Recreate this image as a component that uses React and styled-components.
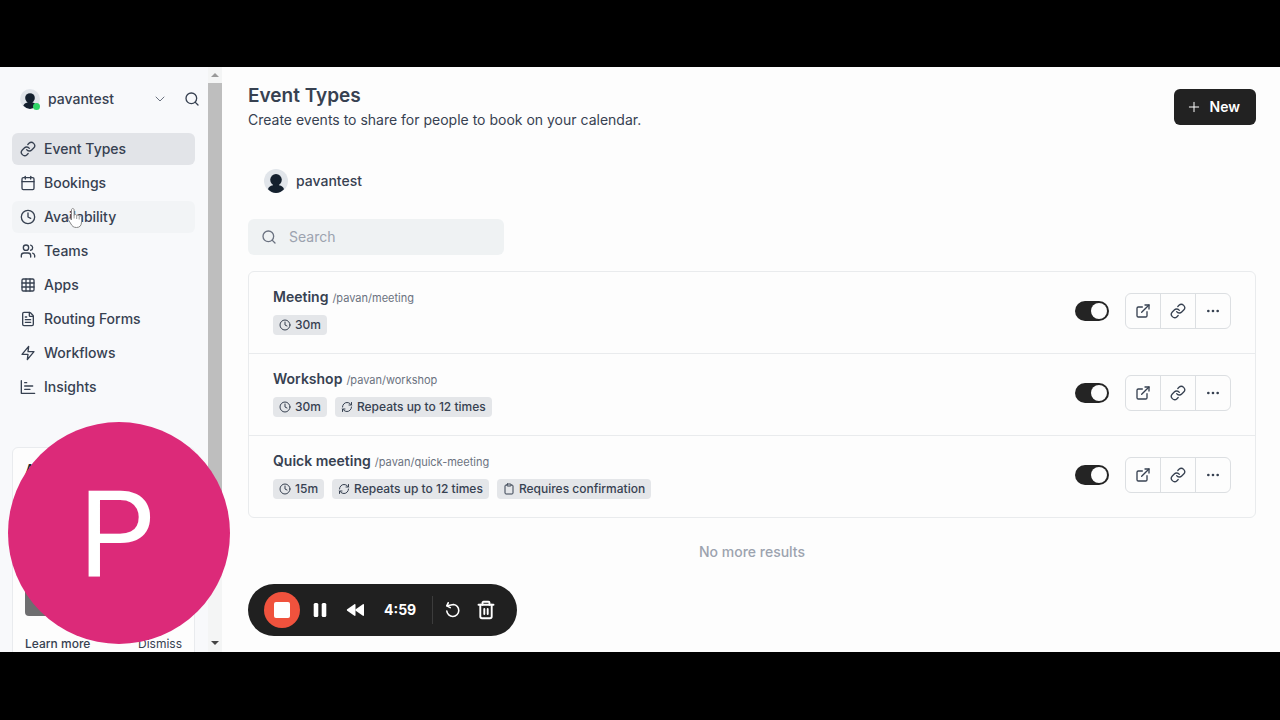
import React, { useState } from "react";
import styled, { createGlobalStyle } from "styled-components";
import {
  Calendar,
  ChevronDown,
  Clipboard,
  Clock,
  Ellipsis,
  ExternalLink,
  FileText,
  Grid3x3,
  Link as LinkIcon,
  Plus,
  RefreshCw,
  Search,
  Users,
} from "lucide-react";

const ZapIcon = ({ size }) => (
  <svg
    width={size}
    height={size}
    viewBox='0 0 24 24'
    fill='none'
    stroke='currentColor'
    strokeWidth='2'
    strokeLinecap='round'
    strokeLinejoin='round'
  >
    <polygon points='13 2 3 14 12 14 11 22 21 10 12 10 13 2' />
  </svg>
);

const InsightsIcon = ({ size }) => (
  <svg
    width={size}
    height={size}
    viewBox='0 0 24 24'
    fill='none'
    stroke='currentColor'
    strokeWidth='2'
    strokeLinecap='round'
    strokeLinejoin='round'
  >
    <path d='M2 2.500v19h20' />
    <path d='M7 5.500h3' />
    <path d='M7 10.500h12' />
    <path d='M7 15.500h8' />
  </svg>
);

const navItems = [
  { name: "Event Types", icon: LinkIcon, state: "active" },
  { name: "Bookings", icon: Calendar },
  { name: "Availability", icon: Clock, state: "hover" },
  { name: "Teams", icon: Users },
  { name: "Apps", icon: Grid3x3 },
  { name: "Routing Forms", icon: FileText },
  { name: "Workflows", icon: ZapIcon },
  { name: "Insights", icon: InsightsIcon },
];

const eventTypes = [
  {
    title: "Meeting",
    slug: "/pavan/meeting",
    badges: [{ icon: Clock, text: "30m" }],
  },
  {
    title: "Workshop",
    slug: "/pavan/workshop",
    badges: [
      { icon: Clock, text: "30m" },
      { icon: RefreshCw, text: "Repeats up to 12 times" },
    ],
  },
  {
    title: "Quick meeting",
    slug: "/pavan/quick-meeting",
    badges: [
      { icon: Clock, text: "15m" },
      { icon: RefreshCw, text: "Repeats up to 12 times" },
      { icon: Clipboard, text: "Requires confirmation" },
    ],
  },
];

const Avatar = ({ size }) => (
  <svg width={size} height={size} viewBox='0 0 24 24'>
    <circle cx='12' cy='12' r='12' fill='#e1e5ea' />
    <circle cx='12' cy='10.8' r='5.8' fill='#14202e' />
    <path
      d='M9 14h6v2.200c3 .6 4.500 2 5 4A12 12 0 0 1 12 24a12 12 0 0 1-8-3.800c.5-2 2-3.400 5-4z'
      fill='#14202e'
    />
  </svg>
);

const Sidebar = () => {
  return (
    <Side>
      <UserRow>
        <UserButton>
          <AvatarWrap>
            <Avatar size={20} />
            <OnlineDot />
          </AvatarWrap>
          <span>pavantest</span>
          <ChevronDown className='chevron' size={16} strokeWidth={1.5} />
        </UserButton>
        <IconButton aria-label='Search'>
          <Search size={16} />
        </IconButton>
      </UserRow>
      <Nav>
        {navItems.map(({ name, icon: Icon, state }) => (
          <NavLink key={name} href='#' $state={state}>
            <Icon size={16} />
            {name}
          </NavLink>
        ))}
      </Nav>
      <Promo>
        <h4>A</h4>
        <PromoImage />
        <PromoFooter>
          <a href='#'>Learn more</a>
          <button>Dismiss</button>
        </PromoFooter>
      </Promo>
    </Side>
  );
};

const EventRow = ({ title, slug, badges }) => {
  const [enabled, setEnabled] = useState(true);
  return (
    <Row>
      <div>
        <RowTitle>
          <h3>{title}</h3>
          <small>{slug}</small>
        </RowTitle>
        <Badges>
          {badges.map(({ icon: Icon, text }) => (
            <Badge key={text}>
              <Icon size={12} />
              {text}
            </Badge>
          ))}
        </Badges>
      </div>
      <RowActions>
        <Toggle
          type='checkbox'
          role='switch'
          aria-label={title}
          checked={enabled}
          onChange={() => setEnabled(!enabled)}
        />
        <ButtonGroup>
          <button aria-label='Preview'>
            <ExternalLink size={16} />
          </button>
          <button aria-label='Copy link'>
            <LinkIcon size={16} />
          </button>
          <button aria-label='More'>
            <Ellipsis size={16} />
          </button>
        </ButtonGroup>
      </RowActions>
    </Row>
  );
};

const Recorder = () => {
  return (
    <RecorderBar>
      <StopButton aria-label='Stop'>
        <span />
      </StopButton>
      <RecorderButton aria-label='Pause'>
        <svg width='18' height='14' viewBox='0 0 18 14' fill='#fff'>
          <rect x='2.700' y='0' width='4.600' height='14' rx='1.500' />
          <rect x='10.700' y='0' width='4.600' height='14' rx='1.500' />
        </svg>
      </RecorderButton>
      <RecorderButton aria-label='Rewind'>
        <svg width='20' height='14' viewBox='-1.500 0 20 14' fill='#fff'>
          <path d='M9 1.800v10.400c0 .7-.6.900-1.100.6L.7 7.700c-.5-.4-.5-1 0-1.400L7.900 1.200C8.400.9 9 1.100 9 1.800z' />
          <path d='M17.500 1.800v10.400c0 .7-.6.900-1.100.6L9.200 7.700c-.5-.4-.5-1 0-1.400l7.200-5.100c.5-.3 1.100-.1 1.100.6z' />
        </svg>
      </RecorderButton>
      <time>4:59</time>
      <Divider />
      <RecorderButton aria-label='Restart'>
        <svg
          width='16'
          height='16'
          viewBox='0 0 16 16'
          fill='none'
          stroke='#fff'
          strokeWidth='1.600'
          strokeLinecap='round'
          strokeLinejoin='round'
        >
          <path d='M2.200 3.800 8.500 2.500a6 6 0 1 1-6.700 6.500' />
          <path d='M3.200.8 1.800 3.900l3.400 1.700' />
        </svg>
      </RecorderButton>
      <RecorderButton aria-label='Delete'>
        <svg
          width='18'
          height='20'
          viewBox='0 0 18 20'
          fill='none'
          stroke='#fff'
          strokeWidth='1.900'
          strokeLinecap='round'
          strokeLinejoin='round'
        >
          <path d='M1.500 4.800h15' />
          <path d='M5.500 4.800v-2c0-.6.400-1 1-1h5c.6 0 1 .4 1 1v2' />
          <path d='M3.300 4.800v11.700c0 1 .7 1.700 1.700 1.700h8c1 0 1.700-.7 1.700-1.700V4.800' />
          <path d='M7.300 9v5M10.700 9v5' />
        </svg>
      </RecorderButton>
    </RecorderBar>
  );
};

const App = () => {
  return (
    <Stage>
      <GlobalStyle />
      <Screen>
        <Sidebar />
        <Scrollbar aria-hidden='true'>
          <svg width='8' height='4' viewBox='0 0 8 4'>
            <path d='M4 0l4 4H0z' fill='#999' />
          </svg>
          <Thumb />
          <svg width='8' height='4' viewBox='0 0 8 4'>
            <path d='M4 4L0 0h8z' fill='#444' />
          </svg>
        </Scrollbar>
        <Main>
          <Header>
            <div>
              <h1>Event Types</h1>
              <p>Create events to share for people to book on your calendar.</p>
            </div>
            <NewButton>
              <Plus size={16} strokeWidth={1.5} />
              New
            </NewButton>
          </Header>
          <Profile href='#'>
            <Avatar size={24} />
            pavantest
          </Profile>
          <SearchBox>
            <Search size={16} />
            <input type='search' placeholder='Search' aria-label='Search' />
          </SearchBox>
          <List>
            {eventTypes.map((item) => (
              <EventRow key={item.slug} {...item} />
            ))}
          </List>
          <NoMore>No more results</NoMore>
          <Recorder />
        </Main>
        <Presenter>P</Presenter>
        <Pointer width='18' height='22' viewBox='0 0 18 22'>
          <path
            d='M5.500 13V3c0-2 2.600-2 2.600 0v5.500c.3-1.500 2.400-1.300 2.600.2.500-1 2.300-.7 2.500.6.700-.9 2.300-.4 2.300 1.200v4.500c0 3.500-1.700 5.500-5 5.500-3 0-4.300-1.300-5.500-3.500l-2.700-4.300c-.8-1.500 1-2.400 2-1.200z'
            fill='#fff'
            stroke='#888'
            strokeLinejoin='round'
          />
          <path d='M8.100 8.500v3M10.700 9v3M13.200 9.500v3' stroke='#999' />
        </Pointer>
      </Screen>
    </Stage>
  );
};

const GlobalStyle = createGlobalStyle`
  * {
    box-sizing: border-box;
  }
  body {
    margin: 0;
    background: #000;
    color: #374151;
    font-family: Inter, "Liberation Sans", sans-serif;
    font-size: 14px;
    line-height: 20px;
  }
  h1, h3, h4, p {
    margin: 0;
  }
  a {
    color: inherit;
    text-decoration: none;
  }
  button, input {
    font: inherit;
    color: inherit;
    border: none;
    padding: 0;
    background: transparent;
  }
  button {
    cursor: pointer;
  }
  svg {
    display: block;
    flex-shrink: 0;
  }
`;

const Stage = styled.div`
  height: 100vh;
  padding: 67px 0 68px;
  background: #000;
`;

const Screen = styled.div`
  position: relative;
  display: flex;
  height: 100%;
  overflow: hidden;
  background: #fdfdfd;
`;

const Side = styled.aside`
  display: flex;
  flex-direction: column;
  width: 208px;
  flex-shrink: 0;
  padding: 16px 8px 0 12px;
  overflow: hidden;
  background: #f8f9fb;
`;

const UserRow = styled.div`
  display: flex;
  flex-shrink: 0;
  align-items: center;
  height: 32px;
  margin-bottom: 18px;
`;

const UserButton = styled.button`
  display: flex;
  flex: 1;
  align-items: center;
  gap: 8px;
  padding: 0 16px 0 8px;
  font-weight: 500;
  .chevron {
    margin-left: auto;
    color: #6b7280;
  }
`;

const AvatarWrap = styled.span`
  position: relative;
`;

const OnlineDot = styled.span`
  position: absolute;
  right: 0;
  bottom: -1px;
  width: 7px;
  height: 7px;
  border-radius: 50%;
  background: #2fd566;
`;

const IconButton = styled.button`
  display: flex;
`;

const Nav = styled.nav`
  display: flex;
  flex-direction: column;
  flex-shrink: 0;
  gap: 2px;
  margin-right: 5px;
`;

const NavLink = styled.a`
  display: flex;
  align-items: center;
  gap: 8px;
  height: 32px;
  padding: 0 8px;
  border-radius: 6px;
  font-weight: 500;
  background: ${({ $state }) =>
    $state === "active"
      ? "#e2e4e8"
      : $state === "hover"
      ? "#f2f4f6"
      : "transparent"};
`;

const Promo = styled.section`
  flex-shrink: 0;
  margin: 44px 5px 0 0;
  padding: 12px;
  border: 1px solid #e9ebee;
  border-radius: 6px;
  background: #fdfdfd;
  h4 {
    font-weight: 600;
    color: #1f2937;
  }
`;

const PromoImage = styled.div`
  height: 124px;
  margin: 12px 0 18px;
  border-radius: 4px;
  background: #6e6e70;
`;

const PromoFooter = styled.div`
  display: flex;
  justify-content: space-between;
  font-size: 12px;
  a {
    font-weight: 500;
  }
`;

const Scrollbar = styled.div`
  display: flex;
  flex-direction: column;
  align-items: center;
  justify-content: space-between;
  width: 14px;
  flex-shrink: 0;
  padding: 6px 0 7px;
  background: #f4f5f5;
`;

const Thumb = styled.div`
  width: 100%;
  height: 420px;
  margin: 6px 0 auto;
  background: #bebebe;
`;

const Main = styled.main`
  position: relative;
  flex: 1;
  min-width: 0;
  padding: 16px 24px 0 26px;
`;

const Header = styled.header`
  display: flex;
  align-items: center;
  justify-content: space-between;
  h1 {
    font-size: 19px;
    font-weight: 600;
    line-height: 26px;
  }
  p {
    line-height: 22px;
  }
`;

const NewButton = styled.button`
  display: flex;
  align-items: center;
  gap: 8px;
  height: 36px;
  padding: 0 16px 0 12px;
  border-radius: 6px;
  background: #222;
  color: #fff;
  font-weight: 600;
`;

const Profile = styled.a`
  display: flex;
  align-items: center;
  gap: 8px;
  margin: 38px 16px 26px;
  font-weight: 500;
`;

const SearchBox = styled.label`
  display: flex;
  align-items: center;
  gap: 12px;
  width: 256px;
  height: 36px;
  padding: 0 13px;
  border-radius: 6px;
  background: #eff2f3;
  color: #6b7280;
  input {
    flex: 1;
    min-width: 0;
    outline: none;
  }
  input::placeholder {
    color: #9ca3af;
    opacity: 1;
  }
`;

const List = styled.ul`
  margin: 16px 0 0;
  padding: 0;
  list-style: none;
  border: 1px solid #e9ebed;
  border-radius: 6px;
`;

const Row = styled.li`
  display: flex;
  align-items: center;
  justify-content: space-between;
  padding: 15px 24px 18px;
  & + & {
    border-top: 1px solid #e9ebed;
  }
`;

const RowTitle = styled.div`
  display: flex;
  align-items: baseline;
  gap: 4px;
  h3 {
    font-size: 14px;
    font-weight: 600;
  }
  small {
    font-size: 11px;
    line-height: 16px;
    color: #6b7280;
  }
`;

const Badges = styled.div`
  display: flex;
  gap: 8px;
  margin-top: 8px;
`;

const Badge = styled.span`
  display: flex;
  align-items: center;
  gap: 4px;
  height: 20px;
  padding: 0 6px;
  border-radius: 4px;
  background: #e4e6e9;
  font-size: 12px;
  font-weight: 500;
`;

const RowActions = styled.div`
  display: flex;
  align-items: center;
  gap: 16px;
`;

const Toggle = styled.input`
  appearance: none;
  width: 34px;
  height: 20px;
  margin: 0;
  padding: 2px;
  border-radius: 10px;
  background: ${({ checked }) => (checked ? "#242424" : "#d1d5db")};
  cursor: pointer;
  &::before {
    content: "";
    display: block;
    width: 16px;
    height: 16px;
    margin-left: ${({ checked }) => (checked ? "14px" : "0")};
    border-radius: 50%;
    background: #fdfdfd;
  }
`;

const ButtonGroup = styled.div`
  display: flex;
  border: 1px solid #dcdfe2;
  border-radius: 6px;
  button {
    display: grid;
    place-items: center;
    width: 34px;
    height: 34px;
  }
  button + button {
    width: 35px;
    border-left: 1px solid #dcdfe2;
  }
`;

const NoMore = styled.p`
  margin-top: 24px;
  text-align: center;
  color: #9ca3af;
  font-weight: 500;
`;

const RecorderBar = styled.div`
  position: absolute;
  left: 26px;
  bottom: 16px;
  display: flex;
  align-items: center;
  height: 52px;
  padding: 0 22px 0 16px;
  border-radius: 26px;
  background: #202020;
  color: #fff;
  time {
    margin: 0 16px 0 19px;
    font-size: 14px;
    font-weight: 700;
  }
`;

const StopButton = styled.button`
  display: grid;
  place-items: center;
  width: 36px;
  height: 36px;
  border-radius: 50%;
  background: #f0523d;
  span {
    width: 16px;
    height: 16px;
    border-radius: 2px;
    background: #fff;
  }
`;

const RecorderButton = styled.button`
  display: flex;
  ${StopButton} + & {
    margin-left: 11px;
  }
  & + & {
    margin-left: 16px;
  }
`;

const Divider = styled.span`
  width: 1px;
  height: 28px;
  margin-right: 12px;
  background: #3c3c3c;
`;

// presenter bubble floats above the page
const Presenter = styled.div`
  position: absolute;
  left: 8px;
  bottom: 8px;
  display: grid;
  place-items: center;
  width: 222px;
  height: 222px;
  padding: 5px 5px 0 0;
  border-radius: 50%;
  background: #dc2a79;
  color: #fff;
  font-family: Roboto, sans-serif;
  font-size: 120px;
  line-height: 120px;
`;

const Pointer = styled.svg`
  position: absolute;
  left: 66px;
  top: 140px;
`;

export default App;
